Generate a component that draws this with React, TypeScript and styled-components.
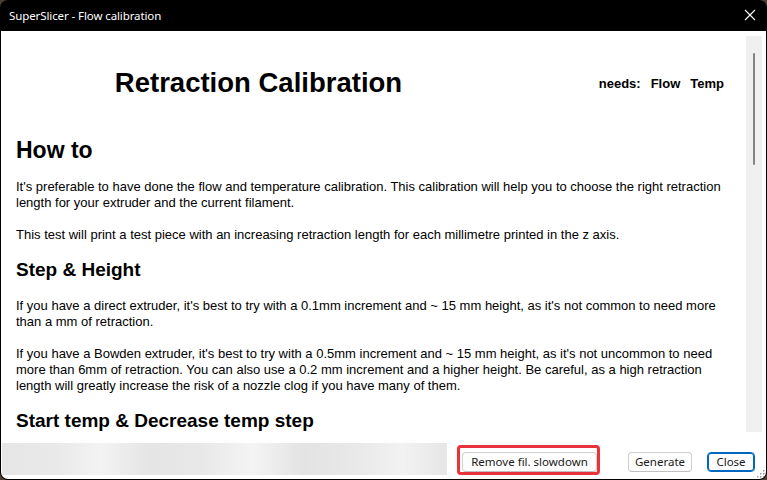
import React from "react";
import styled, { createGlobalStyle } from "styled-components";

const Global = createGlobalStyle`
  html, body { margin: 0; padding: 0; background: #4a4038; }
  body { width: 767px; height: 480px; overflow: hidden; }
  #root { width: 767px; height: 480px; }
  * { box-sizing: border-box; }
`;

const Window = styled.div`
  width: 767px;
  height: 480px;
  background: #000;
  border-radius: 8px;
  overflow: hidden;
  display: flex;
  flex-direction: column;
  padding: 0 1px 1px 1px;
`;

const TitleBar = styled.div`
  height: 31px;
  flex: none;
  display: flex;
  align-items: center;
  justify-content: space-between;
  padding: 0 10px 0 8px;
  color: #fff;
  font-family: "Noto Sans", "Open Sans", sans-serif;
  font-size: 11.5px;
`;

const TitleText = styled.span`
  letter-spacing: -0.1px;
`;

const CloseX = styled.svg`
  width: 12px;
  height: 12px;
  margin-top: -1px;
`;

const Client = styled.div`
  flex: 1;
  background: #fff;
  display: flex;
  flex-direction: column;
  border-radius: 0 0 7px 7px;
  overflow: hidden;
`;

const HtmlArea = styled.div`
  height: 405px;
  flex: none;
  display: flex;
  overflow: hidden;
`;

const Doc = styled.div`
  flex: 1;
  overflow: hidden;
  padding: 0 8px 0 15px;
  font-family: "Liberation Sans", Arial, sans-serif;
  color: #000;
`;

const TitleRow = styled.div`
  display: grid;
  grid-template-columns: 485px 1fr;
  align-items: center;
  height: 70px;
  margin-top: 17px;
`;

const BigTitle = styled.div`
  text-align: center;
  font-weight: bold;
  font-size: 27.5px;
`;

const Needs = styled.div`
  display: flex;
  justify-content: flex-end;
  gap: 10px;
  padding-right: 14px;
  font-weight: bold;
  font-size: 13px;
`;

const H1 = styled.h1`
  margin: 18px 0 0 0;
  font-size: 23px;
  line-height: 28px;
  font-weight: bold;
`;

const H2 = styled.h2`
  margin: 15px 0 0 0;
  font-size: 19px;
  line-height: 24px;
  font-weight: bold;
`;

const P = styled.p<{ $first?: boolean }>`
  margin: ${(p) => (p.$first ? "15px" : "16px")} 0 0 0;
  font-size: 13px;
  line-height: 16px;
`;

const ScrollCol = styled.div`
  width: 20px;
  flex: none;
  padding: 5px 4px 4px 0;
`;

const Track = styled.div`
  height: 396px;
  background: #f0f0f0;
  display: flex;
  justify-content: center;
  padding-top: 17px;
`;

const Thumb = styled.div`
  width: 2px;
  height: 112px;
  background: #858585;
  border-radius: 1px;
`;

const BottomBar = styled.div`
  flex: 1;
  display: flex;
  align-items: flex-start;
  padding: 11px 0 0 1px;
  position: relative;
`;

const Gauge = styled.div`
  width: 445px;
  height: 32px;
  margin-top: -4px;
  flex: none;
  background: linear-gradient(
    90deg,
    #e6e6e6 0%,
    #e9e9e9 12%,
    #f3f3f3 22%,
    #e5e5e5 33%,
    #e8e8e8 45%,
    #f4f4f4 56%,
    #e3e3e3 68%,
    #e9e9e9 80%,
    #f2f2f2 90%,
    #e6e6e6 100%
  );
`;

const Highlight = styled.div`
  margin-left: 10px;
  margin-top: -2px;
  padding: 4px 0 0 2px;
  border: 3px solid #e8323c;
  border-radius: 4px;
  display: flex;
  flex: none;
`;

const Button = styled.button<{ $focus?: boolean }>`
  height: 20px;
  padding: 0;
  flex: none;
  white-space: nowrap;
  font-family: "Noto Sans", "Open Sans", sans-serif;
  font-size: 11.5px;
  color: #1a1a1a;
  background: #fdfdfd;
  border: 1px solid ${(p) => (p.$focus ? "#0067c0" : "#d0d0d0")};
  box-shadow: ${(p) => (p.$focus ? "inset 0 0 0 1px #0067c0" : "none")};
  border-bottom-color: ${(p) => (p.$focus ? "#0067c0" : "#c0c0c0")};
  border-radius: 4px;
  display: flex;
  align-items: center;
  justify-content: center;
  line-height: 1;
`;

const RightButtons = styled.div`
  display: flex;
  gap: 15px;
  margin-left: 28px;
  margin-top: 5px;
`;

const Grip = styled.svg`
  position: absolute;
  right: 1px;
  bottom: 1px;
  width: 9px;
  height: 9px;
`;

export default function App() {
  return (
    <>
      <Global />
      <Window>
        <TitleBar>
          <TitleText>SuperSlicer - Flow calibration</TitleText>
          <CloseX viewBox="0 0 12 12">
            <path d="M1 1 L11 11 M11 1 L1 11" stroke="#fff" strokeWidth="1.1" fill="none" />
          </CloseX>
        </TitleBar>
        <Client>
          <HtmlArea>
            <Doc>
              <TitleRow>
                <BigTitle>Retraction Calibration</BigTitle>
                <Needs>
                  <span>needs:</span>
                  <span>Flow</span>
                  <span>Temp</span>
                </Needs>
              </TitleRow>
              <H1>How to</H1>
              <P $first>
                It's preferable to have done the flow and temperature calibration. This calibration will help you to choose the right retraction length for your extruder and the current filament.
              </P>
              <P>
                This test will print a test piece with an increasing retraction length for each millimetre printed in the z axis.
              </P>
              <H2>Step &amp; Height</H2>
              <P>
                If you have a direct extruder, it's best to try with a 0.1mm increment and ~ 15 mm height, as it's not common to need more than a mm of retraction.
              </P>
              <P>
                If you have a Bowden extruder, it's best to try with a 0.5mm increment and ~ 15 mm height, as it's not uncommon to need more than 6mm of retraction. You can also use a 0.2 mm increment and a higher height. Be careful, as a high retraction length will greatly increase the risk of a nozzle clog if you have many of them.
              </P>
              <H2>Start temp &amp; Decrease temp step</H2>
              <P>
                The retraction test will print at the start temperature and decrease it by the decrease temp step for each tower.
              </P>
            </Doc>
            <ScrollCol>
              <Track>
                <Thumb />
              </Track>
            </ScrollCol>
          </HtmlArea>
          <BottomBar>
            <Gauge />
            <Highlight>
              <Button style={{ width: 135 }}>Remove fil. slowdown</Button>
            </Highlight>
            <RightButtons>
              <Button style={{ width: 64 }}>Generate</Button>
              <Button $focus style={{ width: 48 }}>Close</Button>
            </RightButtons>
            <Grip viewBox="0 0 9 9">
              {[
                [7, 1], [7, 4], [4, 4], [7, 7], [4, 7], [1, 7],
              ].map(([x, y], i) => (
                <rect key={i} x={x} y={y} width="1.5" height="1.5" fill="#9a9a9a" />
              ))}
            </Grip>
          </BottomBar>
        </Client>
      </Window>
    </>
  );
}
